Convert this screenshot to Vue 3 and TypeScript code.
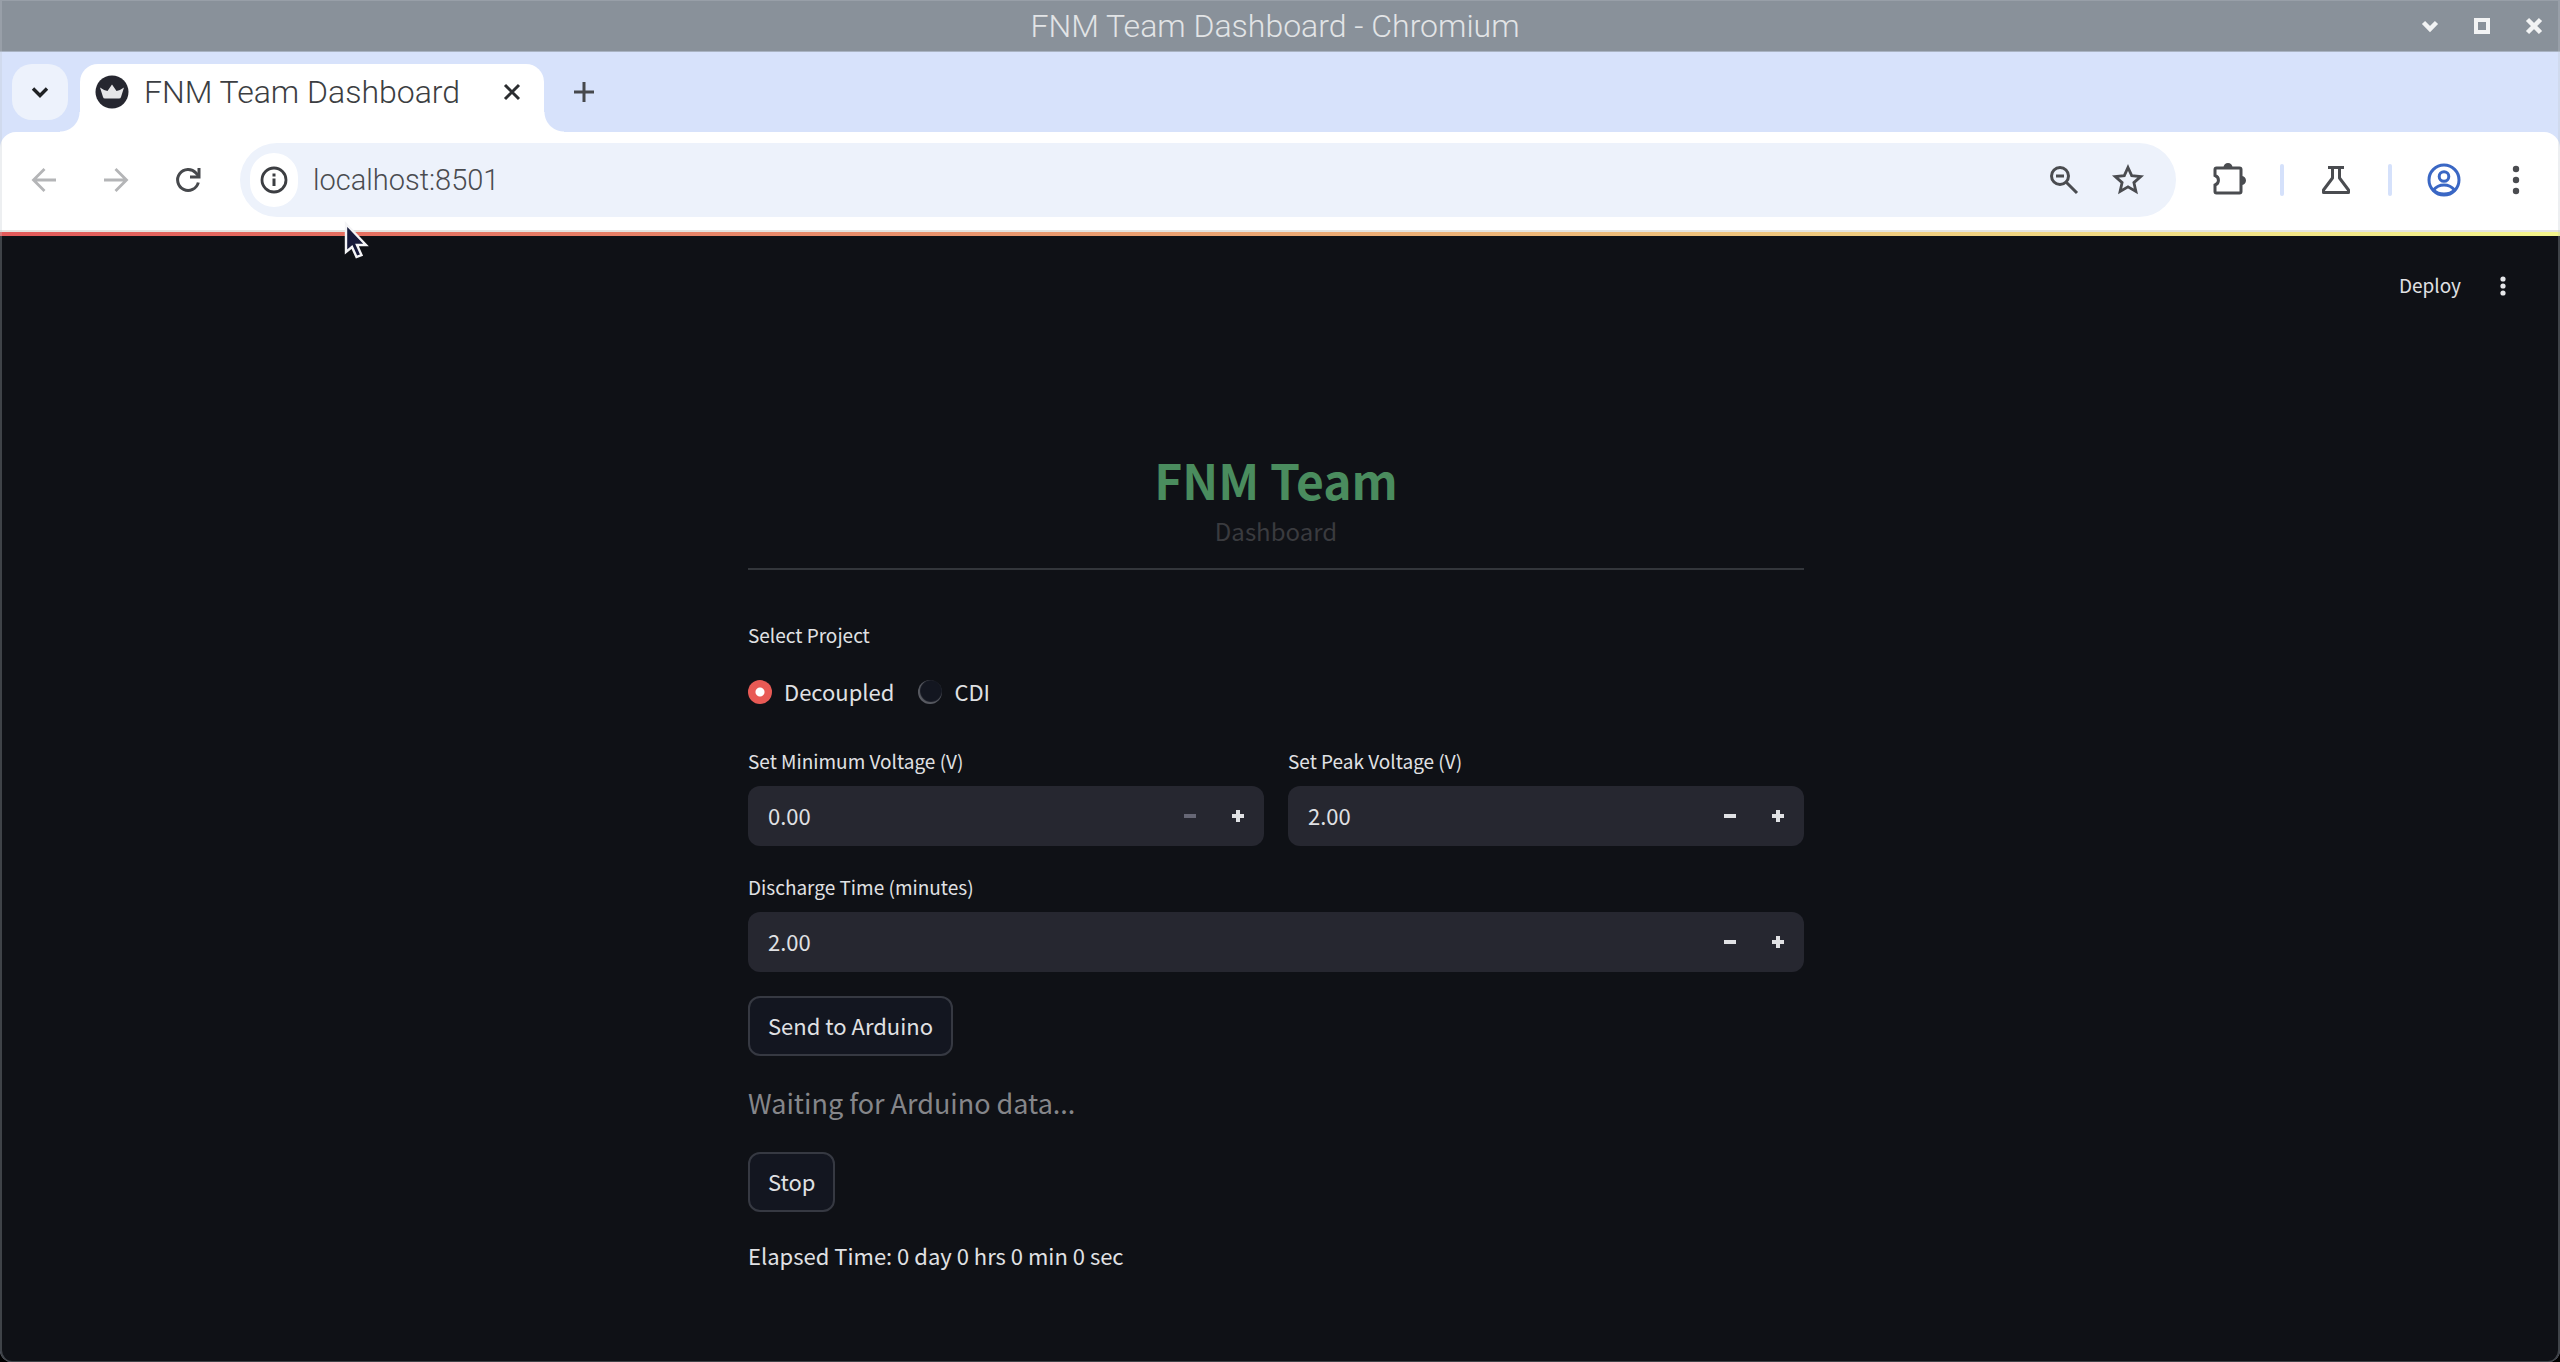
<script setup lang="ts">
import { reactive, ref } from 'vue'

interface NumberField {
  id: string
  label: string
  value: string
  atMinimum: boolean
  wide: boolean
}

const projects: string[] = ['Decoupled', 'CDI']
const project = ref<string>('Decoupled')
const url = ref<string>('localhost:8501')

const fields = reactive<NumberField[]>([
  { id: 'min-voltage', label: 'Set Minimum Voltage (V)', value: '0.00', atMinimum: true, wide: false },
  { id: 'peak-voltage', label: 'Set Peak Voltage (V)', value: '2.00', atMinimum: false, wide: false },
  { id: 'discharge-time', label: 'Discharge Time (minutes)', value: '2.00', atMinimum: false, wide: true },
])
</script>

<template>
  <div class="window">
    <header class="titlebar">
      <div class="window-title">FNM Team Dashboard - Chromium</div>
      <div class="window-buttons">
        <button aria-label="Minimize">
          <svg width="20" height="20" viewBox="0 0 20 20"><path d="M3.500 6.500 10 13l6.500-6.500" fill="none" stroke="#f2f3f4" stroke-width="4.500" /></svg>
        </button>
        <button aria-label="Maximize">
          <svg width="20" height="20" viewBox="0 0 20 20"><rect x="4" y="4" width="12" height="12" fill="none" stroke="#f2f3f4" stroke-width="4" /></svg>
        </button>
        <button aria-label="Close window">
          <svg width="20" height="20" viewBox="0 0 20 20"><path d="M3.500 3.500l13 13M16.500 3.500l-13 13" fill="none" stroke="#f2f3f4" stroke-width="4.500" /></svg>
        </button>
      </div>
    </header>

    <div class="tabstrip">
      <button class="tab-search" aria-label="Search tabs">
        <svg width="20" height="20" viewBox="0 0 20 20"><path d="M3 6.500l7 7 7-7" fill="none" stroke="#1f2124" stroke-width="3.400" /></svg>
      </button>
      <div class="tab">
        <svg class="favicon" width="34" height="34" viewBox="0 0 34 34">
          <circle cx="17" cy="17" r="16.500" fill="#262730" />
          <path d="M5 12.500q4 3 7.500 3.500L17 9.500l4.500 6.500q3.500-.5 7.500-3.500L26 22q-.4 1.500-2 1.500H10q-1.600 0-2-1.500z" fill="#e6e6e8" />
        </svg>
        <span class="tab-title">FNM Team Dashboard</span>
        <button class="tab-close" aria-label="Close tab">
          <svg width="20" height="20" viewBox="0 0 20 20"><path d="M3 3l14 14M17 3L3 17" fill="none" stroke="#2b2d30" stroke-width="3" /></svg>
        </button>
      </div>
      <button class="new-tab" aria-label="New tab">
        <svg width="24" height="24" viewBox="0 0 24 24"><path d="M12 2v20M2 12h20" fill="none" stroke="#46484c" stroke-width="3" /></svg>
      </button>
    </div>

    <nav class="toolbar">
      <div class="nav-buttons">
        <button aria-label="Back">
          <svg width="32" height="32" viewBox="0 0 32 32" fill="none" stroke="#b4b5b7" stroke-width="2.800"><path d="M28 16H6M16.500 5 5.500 16l11 11" /></svg>
        </button>
        <button aria-label="Forward">
          <svg width="32" height="32" viewBox="0 0 32 32" fill="none" stroke="#b4b5b7" stroke-width="2.800"><path d="M4 16h22M15.500 5l11 11-11 11" /></svg>
        </button>
        <button aria-label="Reload">
          <svg width="32" height="32" viewBox="0 0 32 32" fill="none" stroke="#46484c" stroke-width="3"><path d="M26.300 18.500A10.500 10.500 0 1 1 24 9l3 3.500" /><path d="M27 4v9h-9" /></svg>
        </button>
      </div>
      <div class="omnibox">
        <button class="site-info" aria-label="Site information">
          <svg width="30" height="30" viewBox="0 0 30 30"><circle cx="15" cy="15" r="12" fill="none" stroke="#3c3e42" stroke-width="2.800" /><path d="M15 13.500V21M15 8.500v3" stroke="#3c3e42" stroke-width="3" /></svg>
        </button>
        <input v-model="url" class="url" type="text" aria-label="Address" />
        <button aria-label="Zoom">
          <svg width="36" height="36" viewBox="0 0 36 36" fill="none" stroke="#4a4c50" stroke-width="3"><circle cx="14" cy="14" r="8.500" /><path d="M20.500 20.500 31 31M10 14h8" /></svg>
        </button>
        <button aria-label="Bookmark this tab">
          <svg width="36" height="36" viewBox="0 0 36 36"><path d="M18 5.500l3.700 8.200 9 .9-6.800 6 2 8.900L18 24.900l-7.900 4.600 2-8.900-6.800-6 9-.9z" fill="none" stroke="#4a4c50" stroke-width="2.800" /></svg>
        </button>
      </div>
      <button class="tool" aria-label="Extensions">
        <svg width="40" height="40" viewBox="0 0 40 40"><path d="M8.500 8H31.500a1.500 1.500 0 0 1 1.500 1.500v22a1.500 1.500 0 0 1-1.500 1.500H8.500A1.500 1.500 0 0 1 7 31.500V25a5 5 0 0 0 0-9.500V9.500A1.500 1.500 0 0 1 8.500 8z" fill="none" stroke="#4a4c50" stroke-width="3" /><path d="M15.500 7.500a4.500 4.500 0 0 1 9 0zM33.500 16a4.500 4.500 0 0 1 0 9z" fill="#4a4c50" /></svg>
      </button>
      <i class="divider"></i>
      <button class="tool" aria-label="Experiments">
        <svg width="40" height="40" viewBox="0 0 40 40" fill="none" stroke="#4a4c50" stroke-width="3"><path d="M12 7.500h16M16.500 8v10L7.500 30v2.500h25V30l-9-12V8" stroke-linejoin="round" /></svg>
      </button>
      <i class="divider"></i>
      <button class="tool" aria-label="Profile">
        <svg width="40" height="40" viewBox="0 0 40 40" fill="none" stroke="#3a67c4" stroke-width="3"><circle cx="20" cy="20" r="15" /><circle cx="20" cy="16.500" r="4.800" /><path d="M9.500 30q4-5 10.500-5t10.500 5q-4 4-10.500 4T9.500 30" /></svg>
      </button>
      <button class="tool menu" aria-label="Browser menu">
        <svg width="40" height="40" viewBox="0 0 40 40" fill="#4a4c50"><circle cx="20" cy="9" r="3.200" /><circle cx="20" cy="20" r="3.200" /><circle cx="20" cy="31" r="3.200" /></svg>
      </button>
    </nav>

    <div class="page">
      <div class="decoration"></div>
      <div class="app-header">
        <button class="deploy">Deploy</button>
        <button aria-label="Main menu">
          <svg width="24" height="24" viewBox="0 0 24 24" fill="#e6e7ea"><circle cx="12" cy="5" r="2.600" /><circle cx="12" cy="12" r="2.600" /><circle cx="12" cy="19" r="2.600" /></svg>
        </button>
      </div>

      <main class="content">
        <div class="hero">
          <h1>FNM Team</h1>
          <p>Dashboard</p>
        </div>
        <hr />

        <fieldset class="projects">
          <legend>Select Project</legend>
          <div class="options">
            <label v-for="name in projects" :key="name" class="option">
              <input v-model="project" type="radio" name="project" :value="name" />
              <span>{{ name }}</span>
            </label>
          </div>
        </fieldset>

        <div class="fields">
          <div v-for="field in fields" :key="field.id" class="field" :class="{ wide: field.wide }">
            <label :for="field.id">{{ field.label }}</label>
            <div class="number-box">
              <input :id="field.id" v-model="field.value" type="text" inputmode="decimal" />
              <button :disabled="field.atMinimum" :aria-label="'Decrease ' + field.label">
                <svg width="16" height="16" viewBox="0 0 16 16"><path d="M2 8h12" stroke="currentColor" stroke-width="4" /></svg>
              </button>
              <button :aria-label="'Increase ' + field.label">
                <svg width="16" height="16" viewBox="0 0 16 16"><path d="M2 8h12M8 2v12" stroke="currentColor" stroke-width="4" /></svg>
              </button>
            </div>
          </div>
        </div>

        <button class="action send">Send to Arduino</button>
        <p class="waiting">Waiting for Arduino data...</p>
        <button class="action">Stop</button>
        <p class="elapsed">Elapsed Time: 0 day 0 hrs 0 min 0 sec</p>
      </main>
    </div>

    <svg class="pointer" width="28" height="40" viewBox="0 0 28 40"><path d="M3 3v28l6-5 4.500 10 5-2-4.500-10H23z" fill="#16193a" stroke="#f4f4f6" stroke-width="2.400" /></svg>
  </div>
</template>

<style>
html,
body,
#app {
  height: 100%;
}

body {
  margin: 0;
  background: #000;
}
</style>

<style scoped>
.window {
  position: relative;
  box-sizing: border-box;
  display: flex;
  flex-direction: column;
  min-height: 100%;
  overflow: hidden;
  background: #d7e2fb;
  border-radius: 0 0 12px 12px;
  font-family: "Noto Sans CJK SC", "Noto Sans", sans-serif;
}

.window::after {
  content: "";
  position: absolute;
  inset: 0;
  border: solid rgba(190, 196, 204, 0.28);
  border-width: 1px 2px;
  border-radius: 0 0 12px 12px;
  pointer-events: none;
}

button {
  display: flex;
  align-items: center;
  justify-content: center;
  padding: 0;
  border: 0;
  background: none;
  color: inherit;
  font: inherit;
}

input {
  font: inherit;
}

p,
h1 {
  margin: 0;
}

.titlebar {
  display: grid;
  grid-template-columns: 1fr auto 1fr;
  align-items: center;
  box-sizing: border-box;
  height: 52px;
  border-bottom: 1px solid #a9b3c2;
  background: #89919a;
}

.window-title {
  grid-column: 2;
  padding-right: 10px;
  color: #e2e4e6;
  font: 300 32px/50px Roboto, sans-serif;
}

.window-buttons {
  display: flex;
  justify-content: flex-end;
  gap: 32px;
  padding-right: 16px;
}

.tabstrip {
  display: flex;
  align-items: flex-start;
  height: 68px;
  padding: 12px 12px 0;
}

.tab-search {
  width: 56px;
  height: 56px;
  border-radius: 20px;
  background: #edf2fc;
}

.tab {
  position: relative;
  display: flex;
  align-items: center;
  box-sizing: border-box;
  width: 464px;
  height: 68px;
  margin-left: 12px;
  padding: 0 22px 12px 15px;
  border-radius: 18px 18px 0 0;
  background: #fff;
}

.tab::before,
.tab::after {
  content: "";
  position: absolute;
  bottom: 0;
  width: 20px;
  height: 20px;
}

.tab::before {
  right: 100%;
  background: radial-gradient(circle at 0 0, transparent 19px, #fff 20px);
}

.tab::after {
  left: 100%;
  background: radial-gradient(circle at 100% 0, transparent 19px, #fff 20px);
}

.tab-title {
  flex: 1;
  margin-left: 15px;
  color: #3c3e42;
  font: 300 32px/40px Roboto, sans-serif;
}

.new-tab {
  width: 56px;
  height: 56px;
  margin-left: 12px;
}

.toolbar {
  display: flex;
  align-items: center;
  box-sizing: border-box;
  height: 100px;
  padding: 0 24px 2px 28px;
  border-bottom: 2px solid #e4e4e0;
  border-radius: 16px 16px 0 0;
  background: #fff;
}

.nav-buttons {
  display: flex;
  gap: 40px;
  margin-right: 36px;
}

.omnibox {
  display: flex;
  flex: 1;
  align-items: center;
  gap: 28px;
  box-sizing: border-box;
  height: 74px;
  padding: 0 30px 0 10px;
  border-radius: 37px;
  background: #edf2fb;
}

.site-info {
  width: 48px;
  height: 54px;
  border-radius: 27px;
  background: #fff;
}

.url {
  flex: 1;
  min-width: 0;
  margin-left: -13px;
  padding: 0;
  border: 0;
  background: none;
  color: #4a4c50;
  font: 300 29px/40px Roboto, sans-serif;
}

.tool {
  width: 40px;
  height: 40px;
  margin: 0 32px;
}

.tool.menu {
  margin: 0;
}

.divider {
  width: 4px;
  height: 32px;
  border-radius: 2px;
  background: #d5e1fb;
}

.page {
  flex: 1;
  background: #0f1116;
  color: #e0e1e4;
}

.decoration {
  height: 4px;
  background: linear-gradient(90deg, #e25a5a, #f4f58c);
}

.app-header {
  display: flex;
  align-items: center;
  justify-content: flex-end;
  gap: 30px;
  height: 100px;
  padding-right: 45px;
}

.deploy {
  padding-bottom: 2px;
  font-size: 19px;
  line-height: 28px;
}

.content {
  width: 1056px;
  max-width: 90%;
  margin: 0 auto;
  padding: 108px 8px 60px 0;
}

.hero {
  text-align: center;
}

.hero h1 {
  color: #4a8c5e;
  font-size: 48px;
  font-weight: 700;
  line-height: 70px;
}

.hero p {
  color: #3a3b3f;
  font-size: 24px;
  line-height: 34px;
}

hr {
  height: 2px;
  margin: 20px 0 50px;
  border: 0;
  background: #33363b;
}

.projects {
  margin: 0;
  padding: 0;
  border: 0;
}

legend,
.field label {
  display: block;
  padding: 0 0 2px;
  font-size: 19px;
  line-height: 30px;
}

.options {
  display: flex;
  gap: 24px;
  margin-top: 22px;
}

.option {
  display: flex;
  align-items: center;
  gap: 12px;
  font-size: 22px;
  line-height: 34px;
}

.option span {
  padding-bottom: 2px;
}

.option input {
  width: 24px;
  height: 24px;
  margin: 0;
  border-radius: 50%;
  appearance: none;
  background: #131620;
  box-shadow: inset 1px -1px 1px 1px #5a5c63;
}

.option input:checked {
  background: radial-gradient(circle, #fff 4px, #e85a55 5px);
  box-shadow: none;
}

.fields {
  display: grid;
  grid-template-columns: 1fr 1fr;
  gap: 26px 24px;
  margin-top: 36px;
}

.field.wide {
  grid-column: 1 / -1;
}

.number-box {
  display: flex;
  height: 60px;
  margin-top: 8px;
  padding: 0 2px 0 20px;
  border-radius: 12px;
  background: #262730;
}

.number-box input {
  flex: 1;
  min-width: 0;
  padding: 0 0 2px;
  border: 0;
  background: none;
  color: inherit;
  font-size: 22px;
}

.number-box button {
  width: 48px;
}

.number-box button:disabled {
  color: #666775;
}

.action {
  height: 60px;
  padding: 0 18px 2px;
  border: 2px solid #363942;
  border-radius: 12px;
  background: #131620;
  font-size: 22px;
}

.send {
  margin-top: 24px;
}

.waiting {
  margin: 24px 0;
  padding-bottom: 2px;
  color: #85868a;
  font-size: 27px;
  line-height: 46px;
}

.elapsed {
  margin-top: 24px;
  font-size: 22px;
  line-height: 38px;
}

.pointer {
  position: absolute;
  top: 221px;
  left: 343px;
}
</style>
